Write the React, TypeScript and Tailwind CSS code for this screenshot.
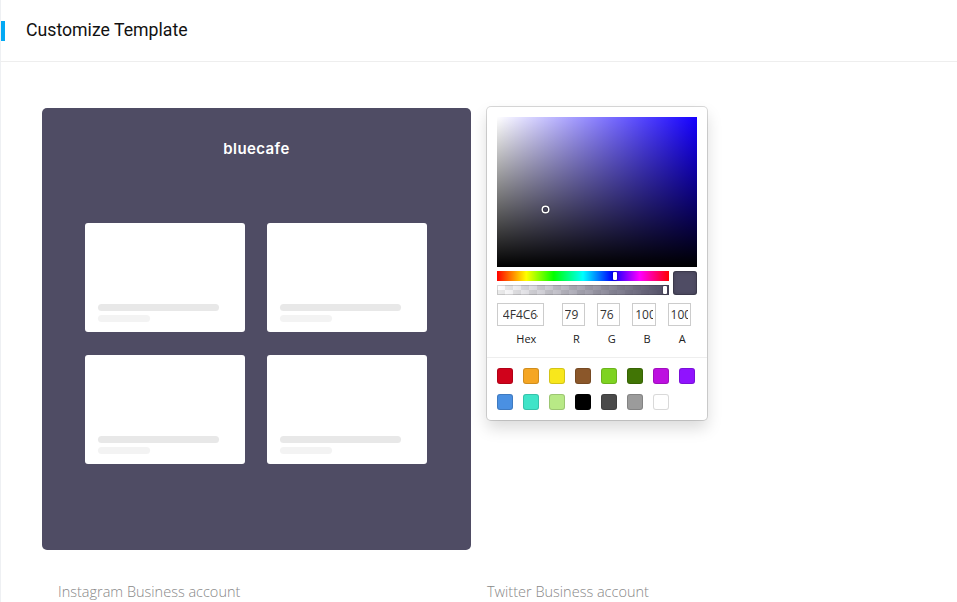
const presets = [
  "#D0021B", "#F5A623", "#F8E71C", "#8B572A", "#7ED321", "#417505", "#BD10E0", "#9013FE",
  "#4A90E2", "#3FE4C8", "#B8E986", "#000000", "#4A4A4A", "#9B9B9B", "#FFFFFF",
];

const PreviewCard = () => (
  <div className="w-[160px] h-[109px] bg-white rounded-[3px] flex flex-col justify-end pl-[13px] pb-[10px] gap-[4px]">
    <div className="w-[121px] h-[7px] rounded-full bg-[#e8e8e8]" />
    <div className="w-[52px] h-[7px] rounded-full bg-[#f3f3f3]" />
  </div>
);

const Field = ({ value, label, wide }: { value: string; label: string; wide?: boolean }) => (
  <div className={wide ? "flex-[2] min-w-0" : "flex-1 min-w-0 pl-[6px]"}>
    <input
      readOnly
      value={value}
      className="block w-[80%] h-[23px] px-[10%] shadow-[inset_0_0_0_1px_#ccc] text-[12px] text-[#333] outline-none bg-white"
    />
    <div className="text-center text-[11px] text-[#222] pt-[6px] leading-[14px]">{label}</div>
  </div>
);

const ColorPicker = () => (
  <div
    className="absolute left-[16px] top-[-1px] w-[220px] bg-white rounded-[4px] p-[10px] pb-0 shadow-[0_0_0_1px_rgba(0,0,0,0.15),0_8px_16px_rgba(0,0,0,0.15)]"
    style={{ fontFamily: '"Open Sans", sans-serif' }}
  >
    {/* saturation */}
    <div className="relative w-[200px] h-[150px] bg-[#1500ff] overflow-hidden">
      <div className="absolute inset-0 bg-[linear-gradient(to_right,#fff,rgba(255,255,255,0))]" />
      <div className="absolute inset-0 bg-[linear-gradient(to_top,#000,rgba(0,0,0,0))]" />
      <div className="absolute left-[24%] top-[61%] w-[5px] h-[5px] -translate-x-[2px] -translate-y-[2px] rounded-full shadow-[0_0_0_1.5px_#fff,inset_0_0_1px_1px_rgba(0,0,0,0.3),0_0_1px_2px_rgba(0,0,0,0.4)]" />
    </div>

    {/* sliders + swatch */}
    <div className="flex py-[4px]">
      <div className="flex-1 flex flex-col gap-[4px]">
        <div className="relative h-[10px] bg-[linear-gradient(to_right,#f00_0%,#ff0_17%,#0f0_33%,#0ff_50%,#00f_67%,#f0f_83%,#f00_100%)]">
          <div className="absolute left-[68.5%] top-[1px] w-[4px] h-[8px] -translate-x-[2px] bg-white rounded-[1px] shadow-[0_0_2px_rgba(0,0,0,0.6)]" />
        </div>
        <div className="relative h-[10px] bg-[repeating-conic-gradient(#ececec_0%_25%,#fff_0%_50%)] bg-[length:16px_10px]">
          <div className="absolute inset-0 bg-[linear-gradient(to_right,rgba(79,76,100,0),#4f4c64)] shadow-[inset_0_0_0_1px_rgba(0,0,0,0.15)]" />
          <div className="absolute right-[2px] top-[1px] w-[4px] h-[8px] bg-white rounded-[1px] shadow-[0_0_2px_rgba(0,0,0,0.6)]" />
        </div>
      </div>
      <div className="w-[24px] h-[24px] ml-[4px] rounded-[3px] bg-[#4f4c64] shadow-[inset_0_0_0_1px_rgba(0,0,0,0.15),inset_0_0_4px_rgba(0,0,0,0.25)]" />
    </div>

    {/* fields */}
    <div className="flex pt-[4px] h-[58px]">
      <Field value="4F4C64" label="Hex" wide />
      <Field value="79" label="R" />
      <Field value="76" label="G" />
      <Field value="100" label="B" />
      <Field value="100" label="A" />
    </div>

    {/* presets */}
    <div className="-mx-[10px] border-t border-[#eee] pt-[10px] pl-[10px] flex flex-wrap">
      {presets.map((c) => (
        <div
          key={c}
          className="w-[16px] h-[16px] mr-[10px] mb-[10px] rounded-[3px] shadow-[inset_0_0_0_1px_rgba(0,0,0,0.15)]"
          style={{ backgroundColor: c }}
        />
      ))}
    </div>
  </div>
);

export default function App() {
  return (
    <div className="w-[957px] h-[602px] overflow-hidden bg-white" style={{ fontFamily: "Roboto, sans-serif" }}>
      <header className="h-[62px] border-b border-[#eeeeee] border-l border-l-[#eef0f3] flex items-center">
        <div className="w-[4px] h-[20px] bg-[#03a9f4]" />
        <h1 className="ml-[21px] text-[17.7px] text-[#111] font-normal">Customize Template</h1>
      </header>

      <main className="h-[540px] border-l border-[#eef0f3] pl-[41px] pt-[46px]">
        <div className="flex">
          {/* Instagram column */}
          <div className="w-[429px]">
            <div className="h-[442px] rounded-[5px] bg-[#4f4c64] flex flex-col pt-[31px]">
              <div
                className="text-center text-[15px] leading-[20px] font-semibold text-white tracking-[0.4px]"
                style={{ fontFamily: "Inter, sans-serif" }}
              >
                bluecafe
              </div>
              <div className="mt-[64px] ml-[43px] grid grid-cols-[160px_160px] gap-x-[22px] gap-y-[23px]">
                <PreviewCard />
                <PreviewCard />
                <PreviewCard />
                <PreviewCard />
              </div>
            </div>
            <p className="mt-[31px] px-4 text-[14.5px] font-light text-[#888]" style={{ fontFamily: '"Open Sans", sans-serif' }}>
              Instagram Business account
            </p>
          </div>

          {/* Twitter column */}
          <div className="w-[429px] relative">
            <div className="h-[442px]" />
            <ColorPicker />
            <p className="mt-[31px] px-4 text-[14.5px] font-light text-[#888]" style={{ fontFamily: '"Open Sans", sans-serif' }}>
              Twitter Business account
            </p>
          </div>
        </div>
      </main>
    </div>
  );
}
